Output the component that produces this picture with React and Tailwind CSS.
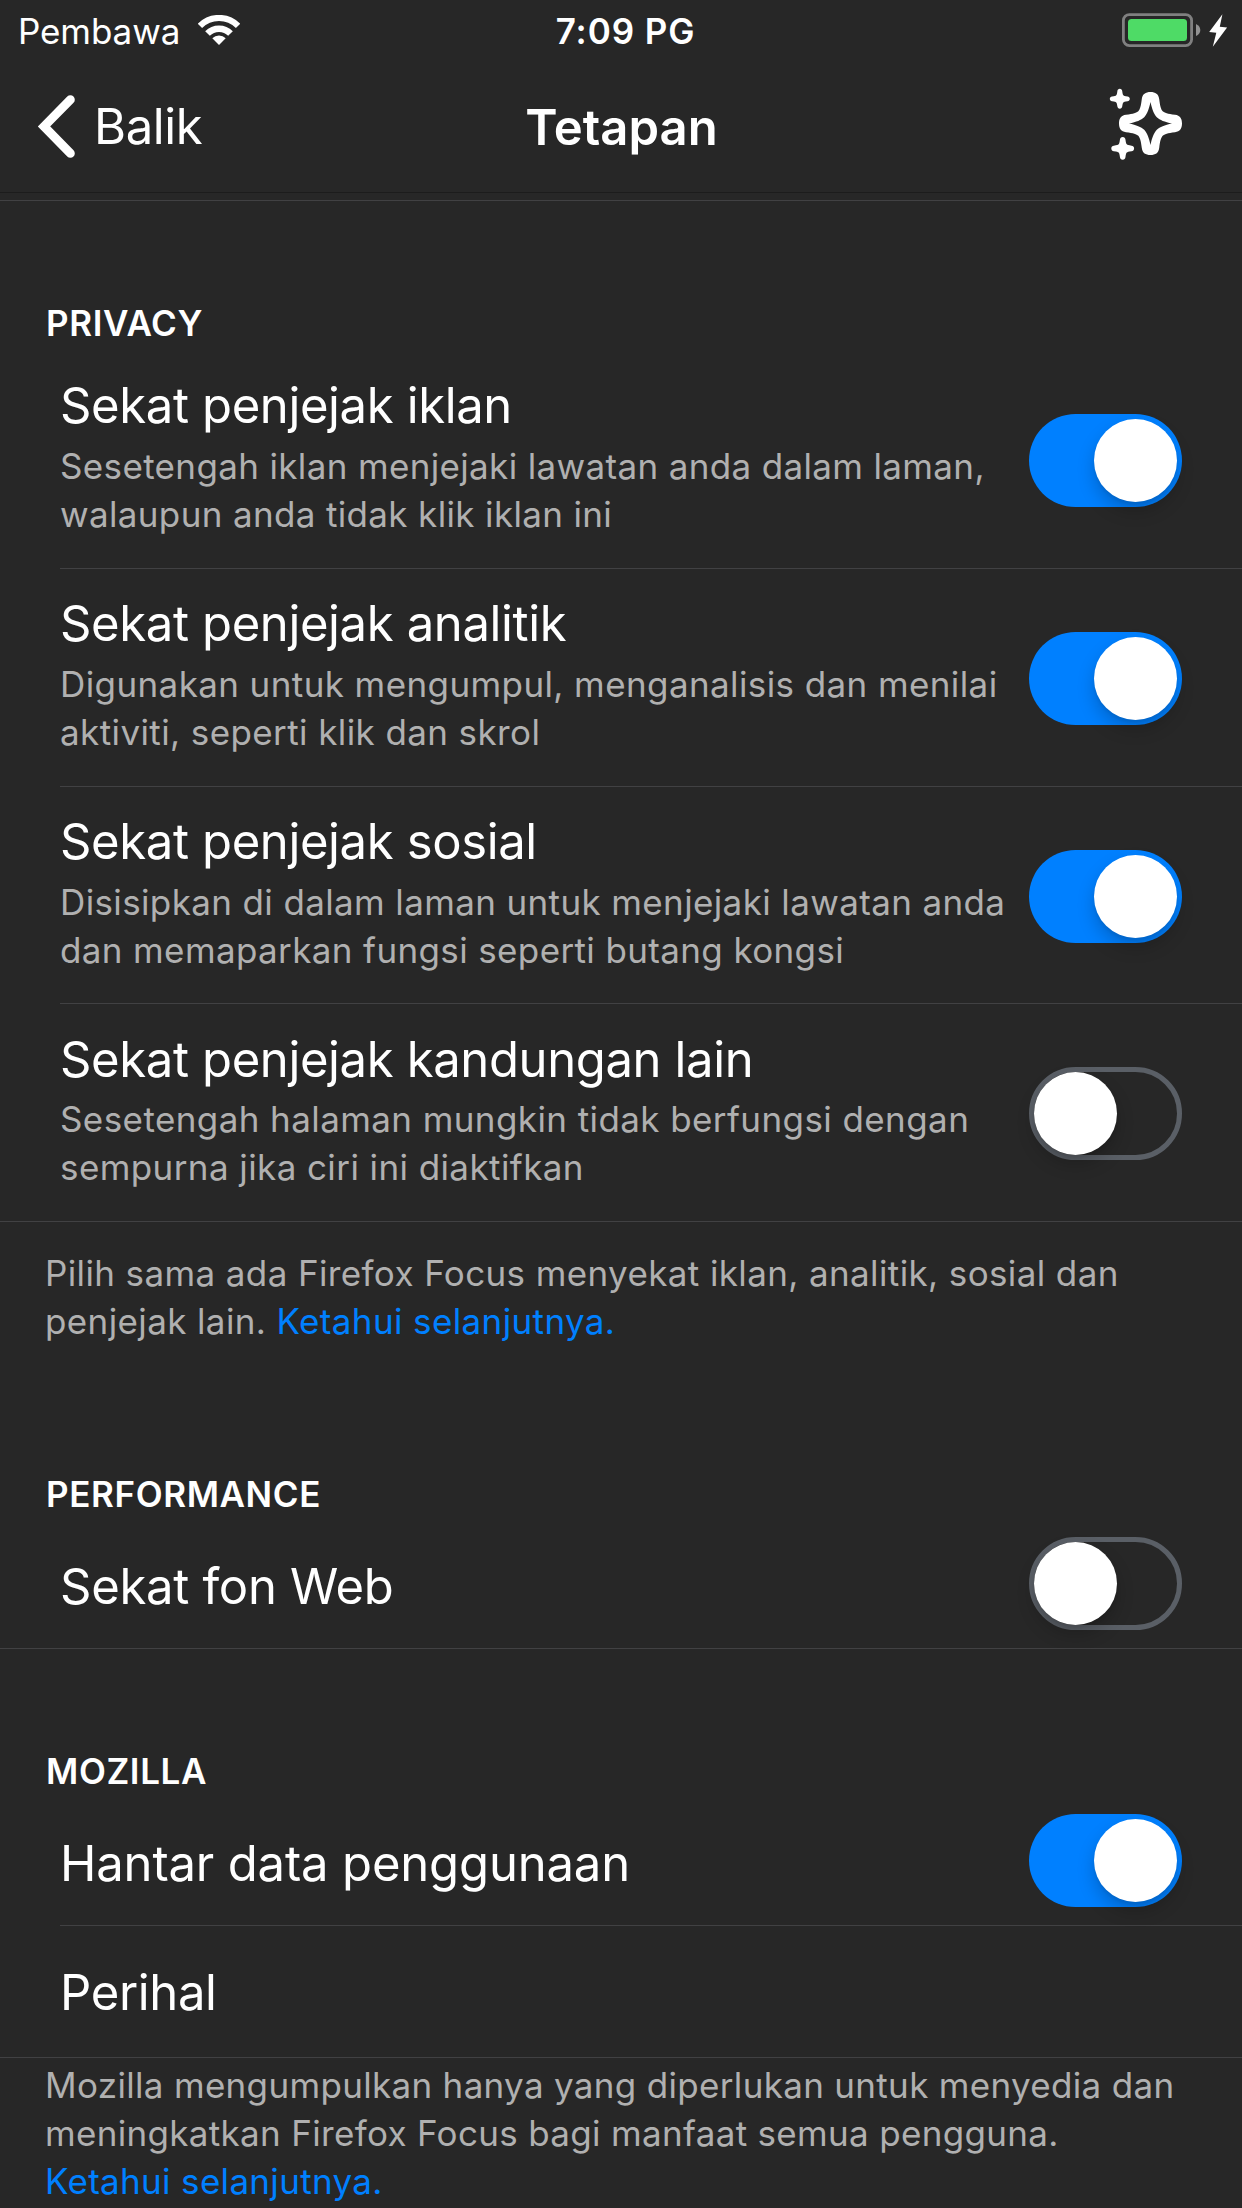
import React from "react";

/* Builds a four-fold symmetric closed path from one quarter of cubic curves. */
function fourFold(start, curves, cx, cy, scale = 1) {
  const rotate = ([x, y], n) => {
    let p = [x, y];
    for (let i = 0; i < n; i++) p = [-p[1], p[0]];
    return `${(cx + p[0] * scale).toFixed(2)} ${(cy + p[1] * scale).toFixed(2)}`;
  };
  let d = `M${rotate(start, 0)}`;
  for (let n = 0; n < 4; n++) {
    for (const curve of curves) d += `C${curve.map((p) => rotate(p, n)).join(" ")}`;
  }
  return d + "Z";
}

const STAR_OUTER = [
  [[5, -31.5], [8, -29.5], [8.7, -24.5]],
  [[9.6, -17], [10.6, -14], [12.2, -12.2]],
  [[14, -10.6], [17, -9.6], [24.5, -8.7]],
  [[29.5, -8], [31.5, -5], [31.5, 0]],
];
const STAR_HOLE = [
  [[1.6, -14], [3.4, -9.5], [6.3, -6.3]],
  [[9.5, -3.4], [14, -1.6], [21.5, 0]],
];
const STAR_SMALL = [
  [[1.5, -10], [2.2, -9], [2.4, -7.8]],
  [[2.8, -5], [3, -4.2], [3.6, -3.6]],
  [[4.2, -3], [5, -2.8], [7.8, -2.4]],
  [[9, -2.2], [10, -1.5], [10, 0]],
];

function SparklesIcon() {
  return (
    <svg className="h-[76px] w-[76px]" viewBox="1108 89 76 76" overflow="visible" fill="white">
      <path
        fillRule="evenodd"
        d={fourFold([0, -31.5], STAR_OUTER, 1150.5, 123.5) + fourFold([0, -21.5], STAR_HOLE, 1150.5, 123.5)}
      />
      <path d={fourFold([0, -10], STAR_SMALL, 1119.8, 98.8)} />
      <path d={fourFold([0, -10], STAR_SMALL, 1122.7, 148.4, 1.14)} />
    </svg>
  );
}

function WifiIcon() {
  return (
    <svg className="h-8 w-[42px]" viewBox="0 0 42 32" fill="none" stroke="white">
      <path d="M1.9 10.9A27 27 0 0 1 40.1 10.9" strokeWidth="6.2" />
      <path d="M9.5 18.5A16.3 16.3 0 0 1 32.5 18.5" strokeWidth="6.6" />
      <path d="M21 30L14.3 23.3A9.5 9.5 0 0 1 27.7 23.3Z" fill="white" stroke="none" />
    </svg>
  );
}

function BatteryIcon() {
  return (
    <svg className="h-[36px] w-[106px]" viewBox="1122 13 106 36">
      <rect x="1123.4" y="14.6" width="68.2" height="31" rx="6" fill="none" stroke="#808080" strokeWidth="2.8" />
      <rect x="1128" y="19" width="59" height="22" rx="3.5" fill="#4edb66" />
      <path d="M1196 24Q1200.3 26 1200.3 30Q1200.3 34 1196 36Z" fill="#929292" />
      <path d="M1222.4 14.3L1209.2 32L1216.3 32.8L1212.8 46.7L1227.1 27.4L1219.8 26.8Z" fill="white" />
    </svg>
  );
}

function Switch({ on = false }) {
  return (
    <span
      role="switch"
      aria-checked={on}
      className={
        "relative block h-[93px] w-[153px] shrink-0 rounded-full " +
        (on ? "bg-[#0080ff]" : "border-[5px] border-[#5a5f66]")
      }
    >
      <span
        className={
          "absolute h-[83px] w-[83px] rounded-full bg-white shadow-[0_9px_18px_rgba(0,0,0,0.2),0_3px_3px_rgba(0,0,0,0.06)] " +
          (on ? "left-[65px] top-[5px]" : "-left-[0.5px] top-0")
        }
      />
    </span>
  );
}

const trackers = [
  {
    title: "Sekat penjejak iklan",
    lines: ["Sesetengah iklan menjejaki lawatan anda dalam laman,", "walaupun anda tidak klik iklan ini"],
    on: true,
    h: "h-[218px]",
    pad: "pt-[25px]",
    descStyle: "mt-1.5 tracking-[0.35px]",
  },
  {
    title: "Sekat penjejak analitik",
    lines: ["Digunakan untuk mengumpul, menganalisis dan menilai", "aktiviti, seperti klik dan skrol"],
    on: true,
    h: "h-[218px]",
    pad: "pt-[25px]",
    descStyle: "mt-1.5 tracking-[0.4px]",
  },
  {
    title: "Sekat penjejak sosial",
    lines: ["Disisipkan di dalam laman untuk menjejaki lawatan anda", "dan memaparkan fungsi seperti butang kongsi"],
    on: true,
    h: "h-[217px]",
    pad: "pt-[25px]",
    descStyle: "mt-1.5 tracking-[0.37px]",
  },
  {
    title: "Sekat penjejak kandungan lain",
    lines: ["Sesetengah halaman mungkin tidak berfungsi dengan", "sempurna jika ciri ini diaktifkan"],
    on: false,
    h: "h-[218px]",
    pad: "pt-[26px]",
    descStyle: "mt-[5px] tracking-[0.41px]",
  },
];

function SectionHeader({ children }) {
  return <h2 className="pl-[46px] text-[35px] font-semibold leading-[50px] tracking-[0.62px]">{children}</h2>;
}

function TrackerRow({ title, lines, on, h, pad, descStyle, last }) {
  return (
    <div className={"border-b border-[#414143] " + h + (last ? "" : " ml-[60px]")}>
      <div className={"flex items-start justify-between pr-[60px]" + (last ? " pl-[60px]" : "")}>
        <div className={"whitespace-nowrap " + pad}>
          <div className="text-[49px] leading-[60px] tracking-[-0.37px]">{title}</div>
          <div className={"text-[35px] leading-[48px] text-[#b0b0b0] " + descStyle}>
            {lines.map((l) => (
              <div key={l}>{l}</div>
            ))}
          </div>
        </div>
        <div className="-ml-10 pt-[63px]">
          <Switch on={on} />
        </div>
      </div>
    </div>
  );
}

export default function App() {
  return (
    <div className="h-[2208px] w-[1242px] overflow-hidden bg-[#272727] font-['Inter',sans-serif] text-white">
      <div className="grid h-[62px] grid-cols-3 items-center">
        <div className="flex items-center pl-[18px]">
          <span className="w-[180px] text-[35px] leading-[50px] tracking-[-0.1px]">Pembawa</span>
          <WifiIcon />
        </div>
        <div className="pl-[9px] text-center text-[35px] font-semibold leading-[50px] tracking-[0.9px]">7:09 PG</div>
        <div className="flex justify-end pr-[14px]">
          <BatteryIcon />
        </div>
      </div>

      <header className="grid h-[131px] grid-cols-3 items-center border-b border-[#1c1c1c]">
        <div className="flex items-center gap-4 pl-9">
          <svg className="h-[68px] w-[42px]" viewBox="36 93 42 68" fill="none" stroke="white">
            <path d="M70.4 99.7L44 126.4L70.4 153.4" strokeWidth="8.8" strokeLinecap="round" />
          </svg>
          <span className="text-[49px] leading-[60px] tracking-[-0.4px]">Balik</span>
        </div>
        <h1 className="pl-px pt-[2px] text-center text-[49px] font-semibold leading-[60px]">Tetapan</h1>
        <div className="flex justify-end pr-[58px]">
          <SparklesIcon />
        </div>
      </header>

      <div className="h-2 border-b border-[#414143]" />

      <section className="pt-[97px]">
        <SectionHeader>PRIVACY</SectionHeader>
        <div className="pt-[3px]">
          {trackers.map((t, i) => (
            <TrackerRow key={t.title} {...t} last={i === trackers.length - 1} />
          ))}
        </div>
        <p className="whitespace-nowrap pl-[45px] pt-[27px] text-[35px] leading-[48px] tracking-[0.38px] text-[#b0b0b0]">
          Pilih sama ada Firefox Focus menyekat iklan, analitik, sosial dan
          <br />
          penjejak lain. <a className="text-[#0080ff]">Ketahui selanjutnya.</a>
        </p>
      </section>

      <section className="pt-[124px]">
        <SectionHeader>PERFORMANCE</SectionHeader>
        <div className="flex h-[130px] items-center justify-between border-b border-[#414143] pl-[60px] pr-[60px]">
          <span className="pt-[7px] text-[49px] leading-[60px] tracking-[-0.3px]">Sekat fon Web</span>
          <Switch />
        </div>
      </section>

      <section className="pt-[97px]">
        <SectionHeader>MOZILLA</SectionHeader>
        <div className="ml-[60px] flex h-[130px] items-center justify-between border-b border-[#414143] pr-[60px]">
          <span className="pt-[7px] text-[49px] leading-[60px] tracking-[-0.16px]">Hantar data penggunaan</span>
          <Switch on />
        </div>
        <div className="flex h-[132px] items-center border-b border-[#414143] pl-[60px]">
          <span className="pt-[3px] text-[49px] leading-[60px] tracking-[-0.35px]">Perihal</span>
        </div>
        <p className="whitespace-nowrap pl-[45px] pt-[3px] text-[35px] leading-[48px] tracking-[0.32px] text-[#b0b0b0]">
          Mozilla mengumpulkan hanya yang diperlukan untuk menyedia dan
          <br />
          meningkatkan Firefox Focus bagi manfaat semua pengguna.
          <br />
          <a className="text-[#0080ff]">Ketahui selanjutnya.</a>
        </p>
      </section>
    </div>
  );
}
